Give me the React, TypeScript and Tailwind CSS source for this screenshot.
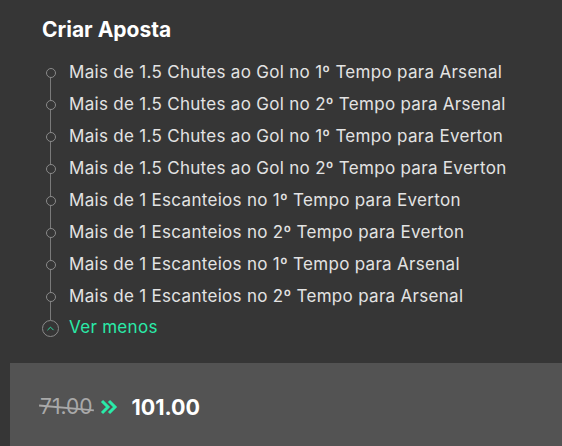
import { ChevronUp } from 'lucide-react';

const markets = [
  'Mais de 1.5 Chutes ao Gol no 1º Tempo para Arsenal',
  'Mais de 1.5 Chutes ao Gol no 2º Tempo para Arsenal',
  'Mais de 1.5 Chutes ao Gol no 1º Tempo para Everton',
  'Mais de 1.5 Chutes ao Gol no 2º Tempo para Everton',
  'Mais de 1 Escanteios no 1º Tempo para Everton',
  'Mais de 1 Escanteios no 2º Tempo para Everton',
  'Mais de 1 Escanteios no 1º Tempo para Arsenal',
  'Mais de 1 Escanteios no 2º Tempo para Arsenal',
];

export default function App() {
  return (
    <div className="w-[562px] h-[446px] bg-[#363636] overflow-hidden flex flex-col" style={{ fontFamily: 'Inter, "Noto Sans", sans-serif' }}>
      <div className="pl-[42px] pt-[16px]">
        <h2 className="text-[21px] leading-[28px] font-bold text-white">Criar Aposta</h2>

        <ul className="mt-[13px]">
          {markets.map((m, i) => (
            <li key={m} className="flex items-center h-8">
              <div className="relative w-[17px] h-8 flex items-center justify-center shrink-0">
                <div className={`absolute left-[8px] w-px bg-[#7a7a7a] bottom-0 ${i === 0 ? 'top-1/2' : 'top-0'}`} />
                <div className="relative w-[10px] h-[10px] rounded-full border border-[#8a8a8a] bg-[#363636]" />
              </div>
              <span className="ml-[10px] text-[17px] tracking-[0.3px] text-[#e3e3e3] whitespace-nowrap">{m}</span>
            </li>
          ))}
          <li className="flex items-center h-[30px]">
            <div className="relative w-[17px] h-[30px] flex items-center justify-center shrink-0">
              <div className="absolute left-[8px] w-px bg-[#7a7a7a] top-0 h-[7px]" />
              <div className="relative w-[17px] h-[17px] rounded-full border border-[#8a8a8a] bg-[#363636] flex items-center justify-center">
                <ChevronUp size={11} strokeWidth={2} className="text-[#2aeaa8]" />
              </div>
            </div>
            <span className="ml-[10px] text-[17px] tracking-[0.3px] text-[#2aeaa8]">Ver menos</span>
          </li>
        </ul>
      </div>

      <div className="mt-auto ml-[10px] h-[83px] bg-[#535353] flex items-center pl-[30px] pt-[5px]">
        <span className="relative text-[21px] text-[#a9a9a9]">
          71.00
          <span className="absolute left-[-1px] right-[-2px] top-1/2 h-[2px] bg-[#a9a9a9] rotate-[5deg]" />
        </span>
        <svg width="18" height="16" viewBox="0 0 18 16" className="ml-[8px]" fill="none" stroke="#2aeaa8" strokeWidth="3" strokeLinejoin="miter">
          <polyline points="2,2 8,8 2,14" />
          <polyline points="9,2 15,8 9,14" />
        </svg>
        <span className="ml-[13px] text-[21.5px] font-bold text-white">101.00</span>
      </div>
    </div>
  );
}
